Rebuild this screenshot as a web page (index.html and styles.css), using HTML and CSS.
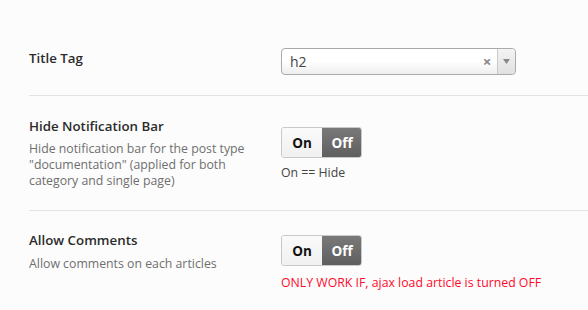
FILE: index.html
```html
<!DOCTYPE html>
<html>
<head>
<meta charset="utf-8">
<link rel="stylesheet" href="styles.css">
</head>
<body>
<div class="settings">
  <div class="row row-first">
    <div class="label">
      <div class="title">Title Tag</div>
    </div>
    <div class="control">
      <div class="select">
        <span class="select-value">h2</span>
        <span class="select-clear">×</span>
        <span class="select-arrow"><svg width="7" height="5" viewBox="0 0 7 5"><path d="M0 0H7L3.5 5Z" fill="#888"/></svg></span>
      </div>
    </div>
  </div>
  <div class="row row-second">
    <div class="label">
      <div class="title">Hide Notification Bar</div>
      <div class="desc">Hide notification bar for the post type "documentation" (applied for both category and single page)</div>
    </div>
    <div class="control">
      <div class="toggle"><span class="on">On</span><span class="off">Off</span></div>
      <div class="note">On == Hide</div>
    </div>
  </div>
  <div class="row row-third">
    <div class="label">
      <div class="title">Allow Comments</div>
      <div class="desc">Allow comments on each articles</div>
    </div>
    <div class="control">
      <div class="toggle"><span class="on">On</span><span class="off">Off</span></div>
      <div class="note warn">ONLY WORK IF, ajax load article is turned OFF</div>
    </div>
  </div>
</div>
</body>
</html>
```

FILE: styles.css
```css
html, body {
  margin: 0;
  padding: 0;
  background: #fcfcfc;
  font-family: "Open Sans", "Noto Sans", sans-serif;
  font-size: 12px;
  color: #333;
}
.settings {
  padding-left: 29px;
}
.row {
  display: flex;
  border-top: 1px solid #e3e3e3;
}
.row-first {
  border-top: none;
  padding: 48px 0 20px;
}
.row-second {
  padding: 20px 0 21px;
}
.row-third {
  padding: 19px 0 19px;
}
.label {
  width: 252px;
  flex: none;
}
.title {
  font-size: 13.3px;
  font-weight: 600;
  line-height: 20px;
  color: #2b2b2b;
}
.desc {
  margin-top: 5px;
  font-size: 12.3px;
  line-height: 16px;
  color: #6f6f6f;
  width: 232px;
}
.row-third .desc { margin-top: 6px; }
.control {
  display: flex;
  flex-direction: column;
  align-items: flex-start;
}
.row-first .control { margin-top: 0; }
.row-second .control { margin-top: 11px; }
.row-third .control { margin-top: 5px; }
.select {
  width: 233px;
  height: 25px;
  border: 1px solid #aaa;
  border-radius: 4px;
  background: linear-gradient(#fff 0%, #fff 50%, #eee 100%);
  display: flex;
  align-items: center;
  box-sizing: content-box;
}
.select-value {
  flex: 1;
  padding-left: 8px;
  font-size: 14px;
  color: #444;
}
.select-clear {
  width: 16px;
  font-size: 15px;
  font-weight: 700;
  color: #888;
  text-align: center;
  line-height: 25px;
}
.select-arrow {
  width: 17px;
  height: 25px;
  margin-left: 2px;
  border-left: 1px solid #c8c8c8;
  background: linear-gradient(#f4f4f4, #e0e0e0);
  border-radius: 0 4px 4px 0;
  display: flex;
  align-items: center;
  justify-content: center;
}
.toggle {
  display: flex;
  height: 31px;
  border-radius: 3px;
  overflow: hidden;
  border: 1px solid #c9c9c9;
  box-sizing: border-box;
  font-family: "Open Sans", sans-serif;
  font-weight: 700;
  font-size: 13.5px;
}
.toggle span {
  width: 40px;
  display: flex;
  align-items: center;
  justify-content: center;
}
.toggle .on {
  background: linear-gradient(#fafafa, #f0f0f0);
  color: #111;
}
.toggle .off {
  background: linear-gradient(#7a7a7a, #5e5e5e);
  color: #fff;
  margin: -1px -1px -1px 0;
  height: 31px;
}
.note {
  margin-top: 7px;
  font-size: 12.3px;
  line-height: 16px;
  color: #444;
}
.note.warn {
  margin-top: 9px;
  color: #ff0a2a;
}
```
